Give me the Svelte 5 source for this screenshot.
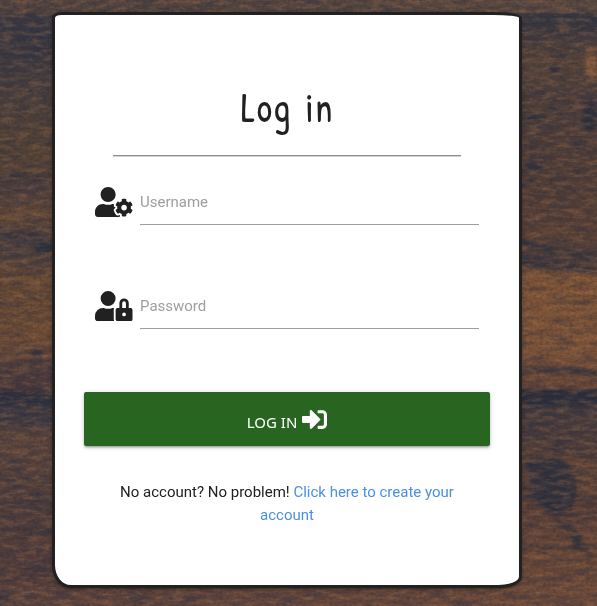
<script>
  const cog = 'M610.5 373.3c2.6-14.1 2.6-28.5 0-42.6l25.8-14.9c3-1.7 4.3-5.2 3.3-8.5-6.7-21.6-18.2-41.2-33.2-57.4-2.3-2.5-6-3.1-9-1.4l-25.8 14.9c-10.9-9.3-23.4-16.5-36.9-21.3v-29.8c0-3.4-2.4-6.4-5.7-7.1-22.3-5-45-4.8-66.2 0-3.3.7-5.7 3.7-5.7 7.1v29.8c-13.5 4.8-26 12-36.9 21.3l-25.8-14.9c-2.9-1.7-6.7-1.1-9 1.4-15 16.2-26.5 35.8-33.2 57.4-1 3.3.4 6.8 3.3 8.5l25.8 14.9c-2.6 14.1-2.6 28.5 0 42.6l-25.8 14.9c-3 1.7-4.3 5.2-3.3 8.5 6.7 21.6 18.2 41.1 33.2 57.4 2.3 2.5 6 3.1 9 1.4l25.8-14.9c10.9 9.3 23.4 16.5 36.9 21.3v29.8c0 3.4 2.4 6.4 5.7 7.1 22.3 5 45 4.8 66.2 0 3.3-.7 5.7-3.7 5.7-7.1v-29.8c13.5-4.8 26-12 36.9-21.3l25.8 14.9c2.9 1.7 6.7 1.1 9-1.4 15-16.2 26.5-35.8 33.2-57.4 1-3.3-.4-6.8-3.3-8.5l-25.8-14.9zM496 400.5c-26.8 0-48.5-21.8-48.5-48.5s21.8-48.5 48.5-48.5 48.5 21.8 48.5 48.5-21.7 48.5-48.5 48.5zM224 256c70.7 0 128-57.3 128-128S294.7 0 224 0 96 57.3 96 128s57.3 128 128 128zm201.2 226.5c-2.3-1.2-4.6-2.6-6.8-3.9l-7.9 4.6c-6 3.4-12.8 5.3-19.6 5.3-10.9 0-21.4-4.6-28.9-12.6-18.3-19.8-32.3-43.9-40.2-69.6-5.5-17.7 1.9-36.4 17.9-45.7l7.9-4.6c-.1-2.6-.1-5.2 0-7.8l-7.9-4.6c-16-9.2-23.4-28-17.9-45.7.9-2.9 2.2-5.8 3.2-8.7-3.8-.3-7.5-1.2-11.4-1.2h-16.7c-22.2 10.2-46.9 16-72.9 16s-50.6-5.8-72.9-16h-16.7C60.2 288 0 348.2 0 422.4V464c0 26.500 21.500 48 48 48h352c10.100 0 19.500-3.200 27.200-8.500-1.200-3.800-2-7.700-2-11.800v-9.200z';
  const lock = 'M224 256A128 128 0 1 0 96 128a128 128 0 0 0 128 128zm96 64a63.08 63.08 0 0 1 8.1-30.5c-4.8-.5-9.5-1.5-14.5-1.5h-16.7a174.08 174.08 0 0 1-145.8 0h-16.7A134.43 134.43 0 0 0 0 422.3V464a48 48 0 0 0 48 48h280.900a63.540 63.540 0 0 1-8.900-32zm288-32h-32v-80a80 80 0 0 0-160 0v80h-32a32 32 0 0 0-32 32v160a32 32 0 0 0 32 32h224a32 32 0 0 0 32-32V320a32 32 0 0 0-32-32zM496 432a32 32 0 1 1 32-32 32 32 0 0 1-32 32zm32-144h-64v-80a32 32 0 0 1 64 0z';
  const fields = [
    { label: 'Username', type: 'text', icon: cog },
    { label: 'Password', type: 'password', icon: lock }
  ];
</script>

<div class="page">
  <svg class="wood" width="597" height="606" viewBox="0 0 597 606" aria-hidden="true">
    <defs>
      <linearGradient id="left" x1="0" y1="0" x2="0" y2="1">
        <stop offset="0" stop-color="#52443f" /><stop offset=".02" stop-color="#483f41" />
        <stop offset=".035" stop-color="#393842" /><stop offset=".09" stop-color="#3c3941" />
        <stop offset=".16" stop-color="#4b403d" /><stop offset=".25" stop-color="#554335" />
        <stop offset=".31" stop-color="#50403d" /><stop offset=".36" stop-color="#624837" />
        <stop offset=".4" stop-color="#483e40" /><stop offset=".46" stop-color="#654935" />
        <stop offset=".56" stop-color="#6d4b34" /><stop offset=".6" stop-color="#533f3b" />
        <stop offset=".64" stop-color="#49393c" /><stop offset=".652" stop-color="#2c303d" />
        <stop offset=".665" stop-color="#30323e" /><stop offset=".675" stop-color="#3d3940" />
        <stop offset=".7" stop-color="#403a40" /><stop offset=".715" stop-color="#5e463c" />
        <stop offset=".84" stop-color="#4e3d3c" /><stop offset=".88" stop-color="#553f3a" />
        <stop offset=".95" stop-color="#503c3c" /><stop offset="1" stop-color="#634439" />
      </linearGradient>
      <linearGradient id="right" x1="0" y1="0" x2="0" y2="1">
        <stop offset="0" stop-color="#5b4a40" /><stop offset=".018" stop-color="#50433f" />
        <stop offset=".028" stop-color="#343640" /><stop offset=".06" stop-color="#453d3e" />
        <stop offset=".1" stop-color="#59453a" /><stop offset=".16" stop-color="#4c3e3b" />
        <stop offset=".3" stop-color="#523e37" /><stop offset=".38" stop-color="#5a4136" />
        <stop offset=".43" stop-color="#51403b" /><stop offset=".45" stop-color="#7e5436" />
        <stop offset=".54" stop-color="#805537" /><stop offset=".6" stop-color="#795038" />
        <stop offset=".64" stop-color="#624436" /><stop offset=".646" stop-color="#2a2e3a" />
        <stop offset=".666" stop-color="#2d303c" /><stop offset=".676" stop-color="#443b3e" />
        <stop offset=".72" stop-color="#4b3c3c" /><stop offset=".76" stop-color="#5b4238" />
        <stop offset=".85" stop-color="#5a4038" /><stop offset=".9" stop-color="#6b4837" />
        <stop offset="1" stop-color="#704b3a" />
      </linearGradient>
      <linearGradient id="top"><stop offset="0" stop-color="#52443f" /><stop offset="1" stop-color="#5b4a40" /></linearGradient>
      <linearGradient id="bottom"><stop offset="0" stop-color="#5c433d" /><stop offset="1" stop-color="#704b3a" /></linearGradient>
      <filter id="soft" x="0" y="0" width="597" height="606" filterUnits="userSpaceOnUse" color-interpolation-filters="sRGB">
        <feGaussianBlur stdDeviation="1.6" />
      </filter>
      <filter id="grain" x="0" y="0" width="597" height="606" filterUnits="userSpaceOnUse" color-interpolation-filters="sRGB">
        <feTurbulence type="fractalNoise" baseFrequency=".04 .17" numOctaves="4" seed="9" />
        <feColorMatrix values="0 0 0 0 .16  0 0 0 0 .18  0 0 0 0 .26  2.600 0 0 0 -1.080" />
      </filter>
      <filter id="glow" x="0" y="0" width="597" height="606" filterUnits="userSpaceOnUse" color-interpolation-filters="sRGB">
        <feTurbulence type="fractalNoise" baseFrequency=".07 .22" numOctaves="4" seed="22" />
        <feColorMatrix values="0 0 0 0 .66  0 0 0 0 .45  0 0 0 0 .3  0 2.600 0 0 -1.080" />
      </filter>
      <filter id="fine" x="0" y="0" width="597" height="606" filterUnits="userSpaceOnUse" color-interpolation-filters="sRGB">
        <feTurbulence type="fractalNoise" baseFrequency=".3 .4" numOctaves="2" seed="3" />
        <feColorMatrix values="0 0 0 0 .14  0 0 0 0 .15  0 0 0 0 .22  0 0 2.200 0 -.88" />
      </filter>
    </defs>
    <rect width="290" height="606" fill="url(#left)" />
    <rect x="290" width="307" height="606" fill="url(#right)" />
    <rect width="597" height="13" fill="url(#top)" />
    <rect y="587" width="597" height="19" fill="url(#bottom)" />
    <g filter="url(#soft)" fill="#252d3d">
      <ellipse cx="554" cy="68" rx="5" ry="6" opacity=".7" />
      <ellipse cx="590" cy="117" rx="8" ry="15" opacity=".7" />
      <ellipse cx="534" cy="118" rx="14" ry="3" opacity=".6" />
      <ellipse cx="532" cy="167" rx="10" ry="4" opacity=".6" />
      <ellipse cx="528" cy="181" rx="9" ry="3" opacity=".5" />
      <path d="M522 239q35 10 75 15v7q-40-7-75-14z" opacity=".55" />
      <path d="M522 255q40 5 75 13v7q-40-4-75-8z" opacity=".6" />
      <path d="M522 368q40-3 75 2v6q-40-4-75-3z" opacity=".65" />
      <ellipse cx="560" cy="448" rx="7" ry="5" opacity=".65" />
      <path d="M525 462q35-12 48 9 9 25-3 38-22 8-35-13z" opacity=".75" />
      <path d="M522 483q33 18 59 52l12 22-4 3q-35-49-67-64z" opacity=".35" />
      <ellipse cx="576" cy="540" rx="4" ry="10" opacity=".55" />
      <path d="M522 545h75v5h-75z" opacity=".4" />
      <ellipse cx="37" cy="354" rx="6" ry="5" opacity=".75" />
      <ellipse cx="47" cy="247" rx="13" ry="7" opacity=".7" />
      <ellipse cx="20" cy="235" rx="18" ry="4" opacity=".5" />
      <path d="M0 175h53v7H0zM0 531l53-4v7H0z" opacity=".4" />
      <ellipse cx="2" cy="599" rx="6" ry="7" opacity=".6" />
    </g>
    <g filter="url(#soft)" fill="none" stroke="#a16b3c" stroke-width="2" opacity=".45">
      <path d="M0 218q27-8 53 0M0 280h53M0 327q27-6 53 0M0 344h53M0 357h53M522 276q40-2 75 6M522 293h75M522 313h75M522 340h75M522 352h75M568 462q14 2 29 12M568 472q14 2 29 13M568 482q14 2 29 14" />
      <path d="M591 48v35" stroke-width="11" />
    </g>
    <rect width="597" height="606" filter="url(#grain)" opacity=".38" />
    <rect width="597" height="606" filter="url(#glow)" opacity=".36" />
    <rect width="597" height="606" filter="url(#fine)" opacity=".3" />
  </svg>

  <main class="card">
    <h1><span>Log in</span></h1>
    <hr />
    <form onsubmit={(e) => e.preventDefault()}>
      {#each fields as field}
        <div class="field">
          <svg viewBox="0 0 640 512" width="37.5" height="30" aria-hidden="true"><path fill="currentColor" d={field.icon} /></svg>
          <input type={field.type} placeholder={field.label} aria-label={field.label} />
        </div>
      {/each}
      <button>
        <span>LOG IN</span>
        <svg viewBox="0 0 512 512" width="25" height="25" aria-hidden="true"><path fill="currentColor" d="M416 448h-84c-6.600 0-12-5.400-12-12v-40c0-6.600 5.400-12 12-12h84c17.700 0 32-14.300 32-32V160c0-17.700-14.300-32-32-32h-84c-6.600 0-12-5.400-12-12V76c0-6.600 5.400-12 12-12h84c53 0 96 43 96 96v192c0 53-43 96-96 96zm-47-209L201 71c-15-15-41-4.500-41 17v96H24c-13.300 0-24 10.700-24 24v96c0 13.300 10.700 24 24 24h136v96c0 21.500 26 32 41 17l168-168c9.300-9.400 9.300-24.600 0-34z" /></svg>
      </button>
    </form>
    <p>No account? No problem! <a href="#register">Click here to create your account</a></p>
  </main>
</div>

<style>
  :global(body) { margin: 0; overflow: hidden; }
  .page {
    position: relative;
    box-sizing: border-box;
    width: 597px;
    height: 606px;
    padding: 12px 75px 18px 52px;
    overflow: hidden;
    background: #51413c;
    font: 15px/22.5px Roboto, sans-serif;
    color: #212121;
  }
  .wood { position: absolute; inset: 0; }
  .card {
    position: relative;
    box-sizing: border-box;
    width: 470px;
    height: 576px;
    padding: 66px 29px 0;
    border: 3px solid #212121;
    border-radius: 2% 6% 5% 4% / 1% 1% 2% 4%;
    background: #fff;
    box-shadow: 0 2px 2px rgba(0, 0, 0, .14), 0 3px 1px -2px rgba(0, 0, 0, .12), 0 1px 5px rgba(0, 0, 0, .2);
  }
  h1 {
    height: 74px;
    margin: 0;
    text-align: center;
    font: 400 43px/50px "Patrick Hand", Lato, sans-serif;
  }
  h1 span { display: inline-block; transform: scaleX(.9); letter-spacing: 1px; word-spacing: 5px; }
  hr { width: 348px; height: 2px; box-sizing: border-box; margin: 0 auto; border: 0; border-top: 1px solid #8e8e8e; border-bottom: 1px solid #d2d2d2; }
  form { margin: 0; }
  .field {
    display: flex;
    align-items: flex-start;
    gap: 7.5px;
    height: 104px;
    padding: 0 11px;
  }
  .field:first-child { margin-top: 23px; }
  .field svg { flex: none; margin-top: 7px; }
  input {
    flex: 1;
    min-width: 0;
    box-sizing: border-box;
    height: 45px;
    padding: 0;
    border: 0;
    border-bottom: 1px solid #9e9e9e;
    background: transparent;
    font: 15px Roboto, sans-serif;
    outline: none;
  }
  input::placeholder { color: #9e9e9e; opacity: 1; }
  button {
    display: flex;
    align-items: center;
    justify-content: center;
    gap: 5px;
    width: 406px;
    height: 54px;
    margin: 4px 0 0;
    padding: 0;
    border: 0;
    border-radius: 2px;
    background: #286520;
    color: #fff;
    font: 15px/20px "Noto Sans", sans-serif;
    box-shadow: 0 2px 2px rgba(0, 0, 0, .14), 0 3px 1px -2px rgba(0, 0, 0, .12), 0 1px 5px rgba(0, 0, 0, .2);
  }
  button span { padding-top: 6px; }
  p { width: 348px; margin: 35px auto 0; text-align: center; }
  a { color: #4a90e2; text-decoration: none; }
</style>
